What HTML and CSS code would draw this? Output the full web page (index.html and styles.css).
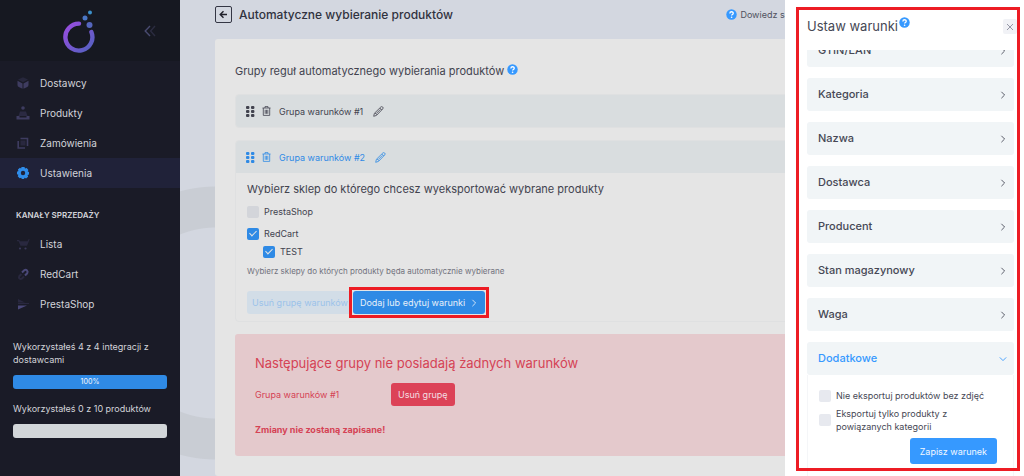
FILE: index.html
```html
<!DOCTYPE html>
<html lang="pl">
<head>
    <meta charset="UTF-8">
    <meta name="viewport" content="width=device-width, initial-scale=1.0">
    <title>Automatyczne wybieranie produktów</title>
    <link rel="stylesheet" href="styles.css">
</head>
<body>
    <!-- shared icons -->
    <svg class="sprite" aria-hidden="true">
        <symbol id="chevron" viewBox="0 0 10 10"><path d="M3 1l4 4-4 4" fill="none" stroke="currentColor" stroke-width="1.1"/></symbol>
        <symbol id="help" viewBox="0 0 12 12">
            <circle cx="6" cy="6" r="5.7" fill="#3699ff"/>
            <path d="M4.2 4.8c0-2.4 3.7-2.3 3.7-.2 0 1.3-1.8 1.3-1.8 2.6" fill="none" stroke="#fff" stroke-width="1.4"/>
            <circle cx="6.1" cy="9" r=".9" fill="#fff"/>
        </symbol>
        <symbol id="grip" viewBox="0 0 9 11">
            <g fill="currentColor">
                <rect x="0" y="0" width="3.4" height="3" rx="1"/><rect x="5" y="0" width="3.4" height="3" rx="1"/>
                <rect x="0" y="4" width="3.4" height="3" rx="1"/><rect x="5" y="4" width="3.4" height="3" rx="1"/>
                <rect x="0" y="8" width="3.4" height="3" rx="1"/><rect x="5" y="8" width="3.4" height="3" rx="1"/>
            </g>
        </symbol>
        <symbol id="trash" viewBox="0 0 9 10">
            <path d="M.5 2h8M3 2V.6h3V2M1.3 2v7.4h6.4V2M3.2 3.8v4M4.5 3.8v4M5.8 3.8v4" fill="none" stroke="currentColor" stroke-width=".8"/>
        </symbol>
        <symbol id="pencil" viewBox="0 0 11 11">
            <path d="M.7 10.3l.7-3L7.8 1q1-.8 1.9 0t0 2L3.5 9.4zM6.8 2l2 2M2 6.9l1.9 1.9M3.2 7.6l4.2-4.2" fill="none" stroke="currentColor" stroke-width=".8"/>
        </symbol>
    </svg>

    <div class="layout">
        <aside class="sidebar">
            <div class="brand">
                <svg class="logo" width="34" height="44" viewBox="0 0 34 44">
                    <defs>
                        <linearGradient id="ring" x1="0" y1="0" x2="1" y2="1">
                            <stop offset="0" stop-color="#9a4ce0"/>
                            <stop offset="1" stop-color="#5361c0"/>
                        </linearGradient>
                    </defs>
                    <path d="M17 14.6A13.5 13.5 0 1 0 29.4 23" fill="none" stroke="url(#ring)" stroke-width="4.4" stroke-linecap="round"/>
                    <circle cx="27.5" cy="16" r="3" fill="#5566bd"/>
                    <circle cx="23" cy="9" r="2.5" fill="#4b76c4"/>
                    <circle cx="28" cy="3.5" r="2" fill="#3c90cc"/>
                </svg>
                <button class="collapse" aria-label="Zwiń menu">
                    <svg width="12" height="12" viewBox="0 0 12 12" fill="none" stroke-width="1.4">
                        <path d="M6 1L1.2 6 6 11" stroke="#494b70"/>
                        <path d="M11 1L6.6 6 11 11" stroke="#2b2c40"/>
                    </svg>
                </button>
            </div>
            <nav class="menu">
                <a href="#">
                    <svg viewBox="0 0 14 14" fill="#3e3c60"><path d="M1.5 4.8L6.5 7.5v5.3L2.8 11q-1.3-.6-1.3-2zM12.5 4.8L7.5 7.5v5.3L11.2 11q1.3-.6 1.3-2z"/><path d="M7 1.2l5 2.4-5 2.6-5-2.6z" fill="#27273c"/></svg>
                    Dostawcy
                </a>
                <a href="#">
                    <svg viewBox="0 0 14 14" fill="#3e3c60"><circle cx="7" cy="2" r="1.8"/><path d="M0.5 10h3v1.5h7V10h3v3.5H.5z"/><path d="M4 5.5h6l1.5 4.5h-9z" fill="#2b2a42"/></svg>
                    Produkty
                </a>
                <a href="#">
                    <svg viewBox="0 0 14 14" fill="none" stroke="#3e3c60" stroke-width="1.6"><path d="M4.5 2.5h7v7.5M2.2 5v7H9"/><rect x="4.5" y="4.5" width="5" height="5" fill="#29283f" stroke="none"/></svg>
                    Zamówienia
                </a>
                <a href="#" class="active">
                    <svg viewBox="0 0 14 14"><path d="M5.5 1h3l.5 1.4 1.7-.5L12.4 4l-.7 1.4L13 6v2.5l-1.4.6.5 1.6-2 1.8-1.5-.7L8 13H5.8l-.6-1.3-1.6.5-1.9-2 .7-1.4L1 8.2V5.7l1.4-.6L1.9 3.5l2-1.8 1.2.7z" fill="#2f8deb"/><circle cx="7" cy="7" r="2.2" fill="#202239"/></svg>
                    Ustawienia
                </a>
            </nav>
            <h2 class="menu-title">Kanały sprzedaży</h2>
            <nav class="menu">
                <a href="#">
                    <svg viewBox="0 0 14 14" fill="#29283f"><path d="M1 3h2l1 1.2h7.5l1-2h1.2L11 8.8H4.5L2.6 4.2H1z"/><circle cx="4" cy="11.5" r="1.1" fill="#3a385a"/><circle cx="9.5" cy="11.5" r="1.1" fill="#3a385a"/></svg>
                    Lista
                </a>
                <a href="#">
                    <svg viewBox="0 0 14 14" fill="none" stroke-width="2"><path d="M6 5.5l2.2-2.2q1.6-1 2.8.2t.2 2.8L9 8.5" stroke="#4a4878"/><path d="M5.5 7L3.3 9.2q-.8 1.5.2 2.3t2.3.2L8 9.5" stroke="#29283f"/></svg>
                    RedCart
                </a>
                <a href="#">
                    <svg viewBox="0 0 14 14"><path d="M2 2l7 3.4H2z" fill="#29283f"/><path d="M2 6.5h11" stroke="#29283f"/><path d="M2 8.5h9L2 12.6z" fill="#4a4878"/></svg>
                    PrestaShop
                </a>
            </nav>
            <div class="usage">
                <p>Wykorzystałeś 4 z 4 integracji z dostawcami</p>
                <div class="progress"><div class="progress-bar" style="width: 100%">100%</div></div>
                <p>Wykorzystałeś 0 z 10 produktów</p>
                <div class="progress"><div class="progress-bar" style="width: 0%"></div></div>
            </div>
        </aside>

        <main class="content">
            <header class="topbar">
                <button class="back" aria-label="Wstecz">
                    <svg width="9" height="9" viewBox="0 0 9 9" fill="none" stroke="currentColor" stroke-width="1.4"><path d="M8 4.5H1.5M4.5 1.2L1.2 4.5l3.3 3.3"/></svg>
                </button>
                <h1>Automatyczne wybieranie produktów</h1>
                <a href="#" class="learn-more"><svg width="11" height="11"><use href="#help"/></svg>Dowiedz się więcej</a>
            </header>

            <section class="card">
                <h2 class="card-title">Grupy reguł automatycznego wybierania produktów <svg width="11" height="11"><use href="#help"/></svg></h2>

                <div class="group">
                    <div class="group-head">
                        <svg class="grip" width="9" height="11"><use href="#grip"/></svg>
                        <button class="icon-btn" aria-label="Usuń"><svg width="9" height="10"><use href="#trash"/></svg></button>
                        <span>Grupa warunków #1</span>
                        <button class="icon-btn" aria-label="Edytuj"><svg width="11" height="11"><use href="#pencil"/></svg></button>
                    </div>
                </div>

                <div class="group">
                    <div class="group-head open">
                        <svg class="grip" width="9" height="11"><use href="#grip"/></svg>
                        <button class="icon-btn" aria-label="Usuń"><svg width="9" height="10"><use href="#trash"/></svg></button>
                        <span>Grupa warunków #2</span>
                        <button class="icon-btn" aria-label="Edytuj"><svg width="11" height="11"><use href="#pencil"/></svg></button>
                    </div>
                    <div class="group-body">
                        <h3>Wybierz sklep do którego chcesz wyeksportować wybrane produkty</h3>
                        <div class="shops">
                            <label class="check"><input type="checkbox">PrestaShop</label>
                            <div class="shop">
                                <label class="check"><input type="checkbox" checked>RedCart</label>
                                <label class="check nested"><input type="checkbox" checked>TEST</label>
                            </div>
                        </div>
                        <p class="hint">Wybierz sklepy do których produkty będa automatycznie wybierane</p>
                        <div class="actions">
                            <button class="btn btn-light">Usuń grupę warunków</button>
                            <div class="marked">
                                <button class="btn btn-primary">Dodaj lub edytuj warunki <svg width="8" height="8"><use href="#chevron"/></svg></button>
                            </div>
                        </div>
                    </div>
                </div>

                <div class="alert">
                    <h3>Następujące grupy nie posiadają żadnych warunków</h3>
                    <div class="alert-row">
                        <span>Grupa warunków #1</span>
                        <button class="btn btn-danger">Usuń grupę</button>
                    </div>
                    <strong>Zmiany nie zostaną zapisane!</strong>
                </div>
            </section>
        </main>
    </div>

    <aside class="drawer">
        <header class="drawer-head">
            <h2>Ustaw warunki</h2>
            <svg class="drawer-help" width="11" height="11"><use href="#help"/></svg>
            <button class="close" aria-label="Zamknij">
                <svg width="8" height="8" viewBox="0 0 8 8" stroke="#8b8d9e" stroke-width=".9"><path d="M1 1l6 6M7 1L1 7"/></svg>
            </button>
        </header>
        <div class="drawer-scroll">
            <div class="conditions">
                <button class="condition">GTIN/EAN<svg width="8" height="8"><use href="#chevron"/></svg></button>
                <button class="condition">Kategoria<svg width="8" height="8"><use href="#chevron"/></svg></button>
                <button class="condition">Nazwa<svg width="8" height="8"><use href="#chevron"/></svg></button>
                <button class="condition">Dostawca<svg width="8" height="8"><use href="#chevron"/></svg></button>
                <button class="condition">Producent<svg width="8" height="8"><use href="#chevron"/></svg></button>
                <button class="condition">Stan magazynowy<svg width="8" height="8"><use href="#chevron"/></svg></button>
                <button class="condition">Waga<svg width="8" height="8"><use href="#chevron"/></svg></button>
                <div class="condition-open">
                    <button class="condition active">Dodatkowe<svg width="8" height="8"><use href="#chevron"/></svg></button>
                    <div class="condition-body">
                        <label class="check"><input type="checkbox">Nie eksportuj produktów bez zdjęć</label>
                        <label class="check"><input type="checkbox">Eksportuj tylko produkty z powiązanych kategorii</label>
                        <button class="btn btn-save">Zapisz warunek</button>
                    </div>
                </div>
            </div>
        </div>
    </aside>
</body>
</html>
```

FILE: styles.css
```css
* {
    box-sizing: border-box;
}
body {
    margin: 0;
    font-family: Inter, "Noto Sans", sans-serif;
    font-size: 9px;
    line-height: 13px;
    color: #42434f;
    overflow: hidden;
}
h1, h2, h3, p {
    margin: 0;
    font-weight: 400;
}
button {
    font: inherit;
    color: inherit;
    border: none;
    background: none;
    padding: 0;
    cursor: pointer;
}
a {
    color: inherit;
    text-decoration: none;
}
svg {
    flex-shrink: 0;
}
.sprite {
    display: none;
}
.layout {
    display: flex;
    min-height: 100vh;
}

/* sidebar */
.sidebar {
    width: 180px;
    flex-shrink: 0;
    background: #1a1b27;
    color: #d3d4da;
}
.brand {
    display: flex;
    align-items: center;
    height: 61px;
    padding: 0 24px 0 62px;
    background: #161821;
}
.collapse {
    display: flex;
    margin-left: auto;
}
.menu {
    padding-top: 7px;
}
.menu a {
    display: flex;
    align-items: center;
    gap: 10px;
    height: 30px;
    padding: 0 16px;
    font-size: 10px;
}
.menu a.active {
    background: #202239;
}
.menu svg {
    width: 14px;
    height: 14px;
}
.menu-title {
    padding: 21px 16px 0;
    font-size: 8px;
    font-weight: 600;
    text-transform: uppercase;
}
.usage {
    padding: 21px 13px;
    font-weight: 500;
}
.progress {
    height: 14px;
    margin: 9px 0 13px;
    border-radius: 3px;
    background: #d2d6d9;
    overflow: hidden;
}
.progress-bar {
    height: 100%;
    background: #2f8ae5;
    color: #e4eefa;
    font-size: 7px;
    line-height: 14px;
    text-align: center;
}

/* main column */
.content {
    flex: 1;
    min-width: 0;
    padding-left: 35px;
    background: radial-gradient(circle at 36px 323px, #d3d7e0 95px, #c9cdd4 96px, #c9cdd4 136px, #d3d7e0 137px);
}
.topbar {
    display: flex;
    align-items: center;
    gap: 7px;
    height: 39px;
    padding: 0 202px 10px 0;
}
.back {
    display: flex;
    align-items: center;
    justify-content: center;
    width: 17px;
    height: 17px;
    border: 1px solid #343644;
    border-radius: 2px;
    color: #20212b;
}
.topbar h1 {
    font-size: 12px;
    font-weight: 500;
    color: #30323e;
}
.learn-more {
    display: flex;
    align-items: center;
    gap: 3px;
    margin-left: auto;
    color: #50525e;
    white-space: nowrap;
}
.card {
    padding: 24px 20px 20px;
    background: #e5e5e5;
    border-radius: 3px;
}
.card-title {
    margin-bottom: 14px;
    font-size: 11px;
    line-height: 17px;
}
.group {
    margin-bottom: 12px;
    border-radius: 4px;
    border: 1px solid #dfe0e1;
    overflow: hidden;
}
.group-head {
    display: flex;
    align-items: center;
    height: 32px;
    padding-left: 10px;
    background: #d9dddf;
}
.group-head.open {
    color: #2f8ae5;
}
.grip {
    margin-right: 7px;
}
.icon-btn {
    display: flex;
}
.group-head span {
    margin: 0 10px 0 8px;
}
.group-body {
    padding: 10px 11px 3px;
}
.group-body h3 {
    margin-bottom: 9px;
    font-size: 11px;
}
.shops {
    display: flex;
    flex-direction: column;
    gap: 9px;
}
.shop {
    display: flex;
    flex-direction: column;
    gap: 5px;
}
.check {
    display: flex;
    align-items: center;
    gap: 5px;
    min-height: 13px;
}
.check.nested {
    padding-left: 16px;
}
.check input {
    appearance: none;
    flex-shrink: 0;
    display: grid;
    place-items: center;
    width: 12px;
    height: 12px;
    margin: 0;
    border-radius: 2px;
    background: #d3d5da;
}
.check input:checked {
    background: #2f8ae5;
}
.check input:checked::after {
    content: "";
    width: 3px;
    height: 6px;
    margin-bottom: 2px;
    border: solid #e5e5e5;
    border-width: 0 1px 1px 0;
    transform: rotate(45deg);
}
.hint {
    margin: 7px 0 9px;
    font-size: 8px;
    color: #71727d;
}
.actions {
    display: flex;
    align-items: center;
}
.btn {
    display: flex;
    align-items: center;
    height: 23px;
    padding: 0 7px;
    border-radius: 3px;
    white-space: nowrap;
}
.btn-light {
    padding: 0 5px;
    background: #d2dde7;
    color: #9cc3ea;
}
.btn-primary {
    gap: 5px;
    background: #2f8ae5;
    color: #e8f0f8;
}
.btn-danger {
    background: #dc4257;
    color: #f3dfe2;
}
.marked {
    margin-left: -4px;
    padding: 1px;
    border: 3px solid #ed1c24;
    background: #e5e5e5;
}
.alert {
    padding: 20px;
    border-radius: 3px;
    background: #e4c9cc;
    color: #d54355;
}
.alert h3 {
    margin-bottom: 11px;
    font-size: 13px;
    line-height: 18px;
}
.alert-row {
    display: flex;
    align-items: center;
    margin-bottom: 17px;
}
.alert-row span {
    width: 136px;
}
.alert strong {
    display: block;
    font-weight: 700;
}

/* conditions drawer */
.drawer {
    position: fixed;
    top: 0;
    right: 0;
    bottom: 0;
    display: flex;
    flex-direction: column;
    width: 239px;
    padding: 0 10px 0 22px;
    background: #fff;
    color: #464855;
}
.drawer::after {
    content: "";
    position: absolute;
    top: 7px;
    right: 4px;
    bottom: 5px;
    left: 11px;
    border: 3px solid #ed1c24;
    pointer-events: none;
}
.drawer-head {
    display: flex;
    align-items: center;
    gap: 1px;
    height: 50px;
    padding-top: 3px;
}
.drawer-head h2 {
    font-size: 13px;
}
.drawer-help {
    margin-bottom: 8px;
}
.close {
    display: flex;
    align-items: center;
    justify-content: center;
    width: 14px;
    height: 15px;
    margin-left: auto;
    margin-right: -3px;
    border-radius: 2px;
    background: #f1f2f6;
}
.drawer-scroll {
    flex: 1;
    overflow: hidden;
}
/* list is scrolled by half a row */
.conditions {
    display: flex;
    flex-direction: column;
    gap: 11px;
    margin-top: -16px;
}
.condition {
    display: flex;
    align-items: center;
    justify-content: space-between;
    width: 100%;
    height: 33px;
    padding: 0 7px 0 11px;
    border-radius: 3px;
    background: #f1f5f7;
    font-size: 11px;
    font-weight: 500;
    text-align: left;
}
.condition.active {
    color: #3699ff;
}
.condition.active svg {
    transform: rotate(90deg);
}
.condition-body {
    display: flex;
    flex-direction: column;
    gap: 5px;
    padding: 14px 16px 20px 11px;
    border: 1px solid #f5f6f8;
    border-top: none;
}
.condition-body .check {
    padding-right: 24px;
    white-space: normal;
}
.condition-body .check:first-child {
    padding-right: 0;
    white-space: nowrap;
}
.condition-body .check input {
    background: #e7e9ef;
}
.btn-save {
    align-self: flex-end;
    height: 26px;
    padding: 0 10px;
    background: #3699ff;
    color: #f2f8ff;
}
```
